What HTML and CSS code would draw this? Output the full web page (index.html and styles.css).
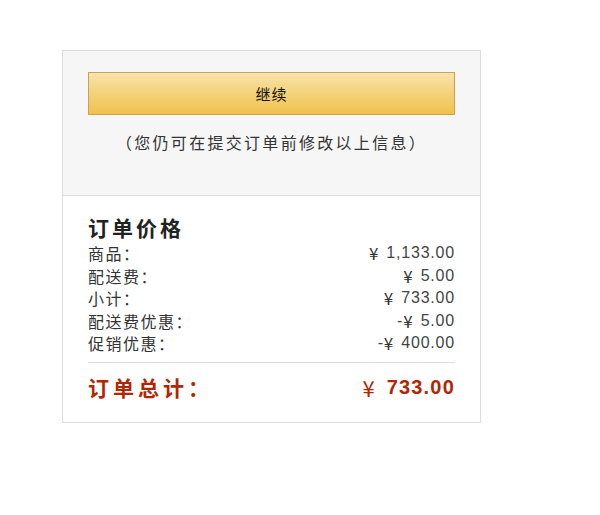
FILE: index.html
```html
<!DOCTYPE html>
<html lang="zh-CN">
<head>
<meta charset="utf-8">
<link rel="stylesheet" href="styles.css">
</head>
<body>
<div class="box">
  <div class="top">
    <button class="btn">继续</button>
    <p class="hint">（您仍可在提交订单前修改以上信息）</p>
  </div>
  <div class="bottom">
    <h3 class="title">订单价格</h3>
    <div class="row"><span class="lbl">商品：</span><span class="val"><span class="yen">¥</span><span>1,133.00</span></span></div>
    <div class="row"><span class="lbl">配送费：</span><span class="val"><span class="yen">¥</span><span>5.00</span></span></div>
    <div class="row"><span class="lbl">小计：</span><span class="val"><span class="yen">¥</span><span>733.00</span></span></div>
    <div class="row"><span class="lbl">配送费优惠：</span><span class="val"><span>-</span><span class="yen">¥</span><span>5.00</span></span></div>
    <div class="row"><span class="lbl">促销优惠：</span><span class="val"><span>-</span><span class="yen">¥</span><span>400.00</span></span></div>
    <div class="total"><span class="lbl">订单总计：</span><span class="val"><span class="yen">¥</span><span>733.00</span></span></div>
  </div>
</div>
</body>
</html>
```

FILE: styles.css
```css
html, body { margin: 0; padding: 0; background: #fff; }
body {
  font-family: "Liberation Sans", "Noto Sans CJK SC", sans-serif;
  color: #333;
}
.box {
  margin: 50px 0 0 62px;
  width: 417px;
  border: 1px solid #dddddd;
}
.top {
  background: #f6f6f6;
  border-bottom: 1px solid #dddddd;
  padding: 21px 25px 0;
  height: 123px;
  box-sizing: content-box;
}
.btn {
  display: block;
  width: 367px;
  height: 43px;
  margin: 0;
  padding: 0;
  border: 1px solid #c9a44f;
  background: linear-gradient(to bottom, #f8e3ab, #f0c14b);
  font-family: "Noto Sans CJK SC", sans-serif;
  font-size: 15px;
  color: #111;
  letter-spacing: 1px;
}
.hint {
  margin: 16px 0 0;
  text-align: center;
  font-family: "Noto Sans CJK SC", sans-serif;
  font-size: 16px;
  line-height: 22px;
  color: #333;
  letter-spacing: 2.3px;
}
.bottom {
  padding: 17px 25px 21px;
}
.title {
  margin: 0;
  font-family: "Noto Sans CJK SC", sans-serif;
  font-size: 21px;
  line-height: 29px;
  font-weight: bold;
  color: #222;
  letter-spacing: 3px;
}
.row {
  display: flex;
  justify-content: space-between;
  align-items: center;
  height: 22.5px;
  font-size: 16px;
  line-height: 22px;
  color: #333;
}
.row .lbl { font-family: "Noto Sans CJK SC", sans-serif; letter-spacing: 1.5px; }
.val {
  display: flex;
  align-items: center;
  font-family: "Liberation Sans", "Noto Sans CJK SC", sans-serif;
}
.row .val { color: #444; letter-spacing: 0.8px; }
.yen { font-family: "Noto Sans CJK SC", sans-serif; font-size: 17px; margin-right: 8px; letter-spacing: 0; color: #333; }
.total {
  display: flex;
  justify-content: space-between;
  align-items: center;
  height: 28px;
  border-top: 1px solid #dddddd;
  margin-top: 7px;
  padding-top: 10px;
  color: #b12704;
  font-size: 20px;
  line-height: 28px;
  font-weight: bold;
}
.total .lbl { font-family: "Noto Sans CJK SC", sans-serif; letter-spacing: 4px; font-size: 21px; }
.total .val { letter-spacing: 1.2px; }
.total .yen { font-weight: normal; font-size: 22px; margin-right: 12px; color: #b12704; }
```
